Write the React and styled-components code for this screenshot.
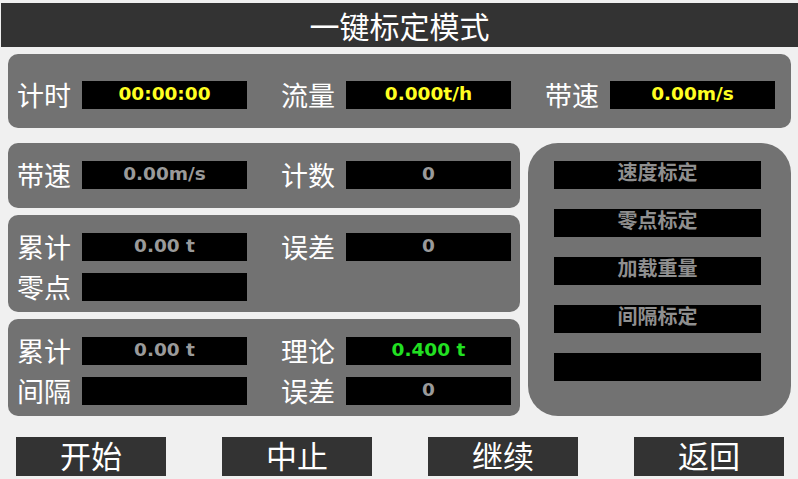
import styled, { createGlobalStyle } from 'styled-components'

const GlobalStyle = createGlobalStyle`
  html, body {
    margin: 0;
    padding: 0;
    background: #f0f0f0;
  }
`

const Screen = styled.div`
  width: 798px;
  height: 479px;
  background: #f0f0f0;
  overflow: hidden;
  font-family: "Noto Sans CJK SC", "DejaVu Sans", sans-serif;
`

const TitleBar = styled.div`
  margin: 3px 0 0 1px;
  height: 44px;
  background: #333333;
  color: #ffffff;
  font-size: 30px;
  line-height: 44px;
  text-align: center;
`

const Body = styled.div`
  padding: 7px 7px 0 8px;
`

const Panel = styled.div`
  background: #727272;
  border-radius: 10px;
  padding: ${p => p.$pad || '18px 0 11px 9px'};
  display: flex;
  flex-direction: column;
  gap: 12px;
`

const Row = styled.div`
  display: flex;
  align-items: center;
  gap: 34px;
  height: 28px;
`

const Cell = styled.div`
  display: flex;
  align-items: center;
  width: 230px;
`

const Label = styled.span`
  width: 65px;
  color: #ffffff;
  font-size: 27px;
  line-height: 26px;
  white-space: nowrap;
`

const Value = styled.div`
  width: 165px;
  height: 28px;
  background: #000000;
  color: ${p => p.$color || '#9a9a9a'};
  font-family: "DejaVu Sans", sans-serif;
  font-weight: bold;
  font-size: 18.5px;
  line-height: 26px;
  text-align: center;
  white-space: pre;
`

const Middle = styled.div`
  display: flex;
  gap: 8px;
  margin-top: 15px;
`

const LeftColumn = styled.div`
  width: 512px;
  display: flex;
  flex-direction: column;
  gap: 7px;
`

const CalibPanel = styled.div`
  width: 263px;
  height: 273px;
  box-sizing: border-box;
  background: #727272;
  border-radius: 30px;
  padding: 18px 0 0 26px;
  display: flex;
  flex-direction: column;
  gap: 20px;
`

const CalibButton = styled.div`
  width: 207px;
  height: 28px;
  background: #000000;
  color: #8f8f8f;
  font-weight: bold;
  font-size: 20px;
  line-height: 22px;
  text-align: center;
`

const Footer = styled.div`
  display: flex;
  gap: 56px;
  padding: 21px 0 0 8px;
`

const FooterButton = styled.div`
  width: 150px;
  height: 39px;
  background: #333333;
  color: #ffffff;
  font-size: 31px;
  line-height: 36px;
  text-align: center;
`

const Field = ({ label, value, color }) => (
  <Cell>
    <Label>{label}</Label>
    <Value $color={color}>{value}</Value>
  </Cell>
)

const calibItems = ['速度标定', '零点标定', '加载重量', '间隔标定', '']
const actions = ['开始', '中止', '继续', '返回']

const App = () => {
  return (
    <Screen>
      <GlobalStyle />
      <TitleBar>一键标定模式</TitleBar>
      <Body>
        <Panel $pad="27px 0 19px 9px">
          <Row>
            <Field label="计时" value="00:00:00" color="#ffff22" />
            <Field label="流量" value="0.000t/h" color="#ffff22" />
            <Field label="带速" value="0.00m/s" color="#ffff22" />
          </Row>
        </Panel>

        <Middle>
          <LeftColumn>
            <Panel $pad="18px 0 19px 9px">
              <Row>
                <Field label="带速" value="0.00m/s" />
                <Field label="计数" value="0" />
              </Row>
            </Panel>
            <Panel>
              <Row>
                <Field label="累计" value="0.00 t" />
                <Field label="误差" value="0" />
              </Row>
              <Row>
                <Field label="零点" value="" />
              </Row>
            </Panel>
            <Panel>
              <Row>
                <Field label="累计" value="0.00 t" />
                <Field label="理论" value="0.400 t" color="#22e022" />
              </Row>
              <Row>
                <Field label="间隔" value="" />
                <Field label="误差" value="0" />
              </Row>
            </Panel>
          </LeftColumn>

          <CalibPanel>
            {calibItems.map((item, i) => (
              <CalibButton key={i}>{item}</CalibButton>
            ))}
          </CalibPanel>
        </Middle>

        <Footer>
          {actions.map(a => (
            <FooterButton key={a}>{a}</FooterButton>
          ))}
        </Footer>
      </Body>
    </Screen>
  )
}

export default App
